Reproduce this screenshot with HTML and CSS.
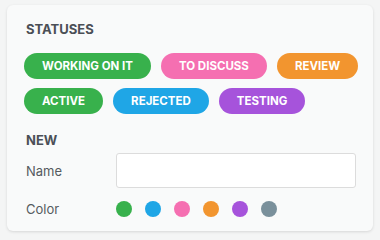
FILE: index.html
```html
<!DOCTYPE html>
<html lang="en">
<head>
    <meta charset="UTF-8">
    <title>Statuses</title>
    <link rel="stylesheet" href="styles.css">
</head>
<body>
    <div class="card">
        <h2 class="section-title">STATUSES</h2>
        <div class="status-list">
            <span class="pill green">WORKING ON IT</span>
            <span class="pill pink">TO DISCUSS</span>
            <span class="pill orange">REVIEW</span>
            <span class="pill green">ACTIVE</span>
            <span class="pill blue">REJECTED</span>
            <span class="pill purple">TESTING</span>
        </div>

        <h2 class="section-title new-title">NEW</h2>
        <div class="form-row">
            <label for="status-name">Name</label>
            <input type="text" id="status-name">
        </div>
        <div class="form-row color-row">
            <label>Color</label>
            <div class="dots">
                <span class="dot green"></span>
                <span class="dot blue"></span>
                <span class="dot pink"></span>
                <span class="dot orange"></span>
                <span class="dot purple"></span>
                <span class="dot gray"></span>
            </div>
        </div>
    </div>
</body>
</html>
```

FILE: styles.css
```css
body {
    margin: 0;
    padding: 5px 7px;
    background-color: #f4f5f5;
    font-family: Inter, "Open Sans", Arial, sans-serif;
}
.card {
    width: 366px;
    height: 226px;
    box-sizing: border-box;
    padding: 16px 17px;
    background: #f9fafa;
    border-radius: 6px;
    box-shadow: 0 1px 3px rgba(0,0,0,0.12);
}
.section-title {
    margin: 0;
    padding-left: 2px;
    font-size: 13px;
    line-height: 16px;
    font-weight: 700;
    color: #4b4f56;
}
.status-list {
    display: flex;
    flex-wrap: wrap;
    gap: 9px 10px;
    margin-top: 16px;
    width: 340px;
}
.pill {
    display: inline-block;
    height: 26px;
    line-height: 26px;
    padding: 0 18px;
    border-radius: 13px;
    color: white;
    font-size: 11.5px;
    font-weight: 700;
    white-space: nowrap;
}
.green { background-color: #38b14c; }
.pink { background-color: #f56fb1; }
.orange { background-color: #f2952f; }
.blue { background-color: #1fa6e6; }
.purple { background-color: #a653db; }
.gray { background-color: #7a909b; }
.new-title {
    margin-top: 18px;
}
.form-row {
    display: flex;
    align-items: center;
    margin-top: 5px;
}
.form-row label {
    width: 90px;
    padding-left: 2px;
    font-size: 13px;
    color: #555a60;
}
.form-row input {
    width: 241px;
    height: 35px;
    box-sizing: border-box;
    border: 1px solid #dcdcdc;
    border-radius: 3px;
    background: white;
}
.color-row {
    margin-top: 8px;
    height: 26px;
}
.dots {
    display: flex;
    gap: 13px;
}
.dot {
    width: 16px;
    height: 16px;
    border-radius: 50%;
}
```
